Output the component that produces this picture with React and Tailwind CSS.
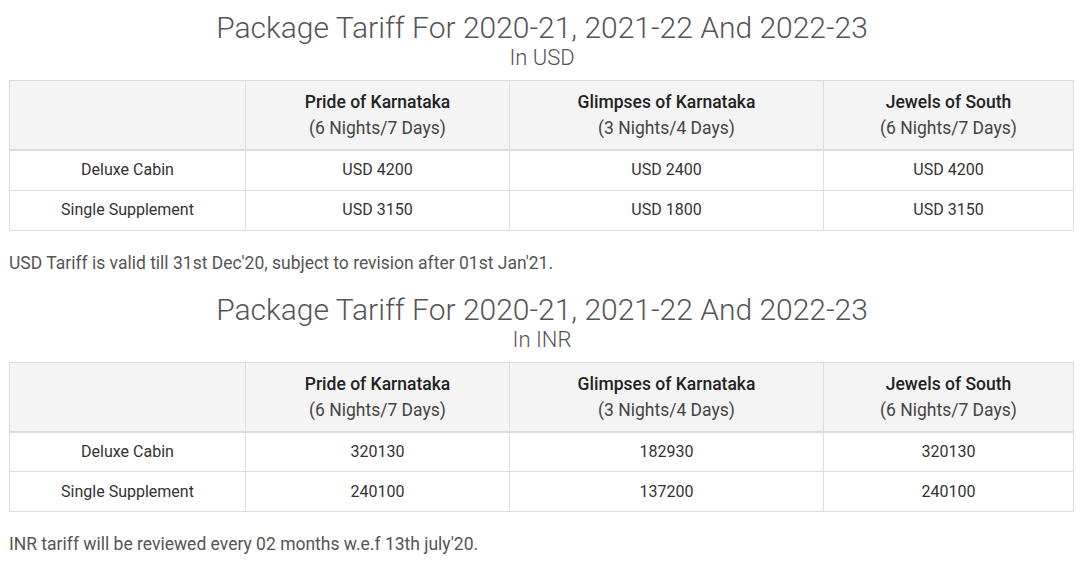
import React from 'react';

const packages = [
  { name: 'Pride of Karnataka', duration: '(6 Nights/7 Days)', w: 'w-[264px]' },
  { name: 'Glimpses of Karnataka', duration: '(3 Nights/4 Days)', w: 'w-[314px]' },
  { name: 'Jewels of South', duration: '(6 Nights/7 Days)', w: 'w-[250px]' },
];

const tariffs = [
  {
    currency: 'In USD',
    rows: [
      { label: 'Deluxe Cabin', values: ['USD 4200', 'USD 2400', 'USD 4200'] },
      { label: 'Single Supplement', values: ['USD 3150', 'USD 1800', 'USD 3150'] },
    ],
    note: "USD Tariff is valid till 31st Dec'20, subject to revision after 01st Jan'21.",
  },
  {
    currency: 'In INR',
    rows: [
      { label: 'Deluxe Cabin', values: ['320130', '182930', '320130'] },
      { label: 'Single Supplement', values: ['240100', '137200', '240100'] },
    ],
    note: "INR tariff will be reviewed every 02 months w.e.f 13th july'20.",
  },
];

function TariffBlock({ currency, rows, note }) {
  return (
    <section>
      {/* Heading */}
      <div className="text-center text-[#555] font-light">
        <h2 className="text-[30px] leading-[36px] pt-[10px]">Package Tariff For 2020-21, 2021-22 And 2022-23</h2>
        <p className="text-[22px] leading-[24px]">{currency}</p>
      </div>

      {/* Table */}
      <table className="mt-[10px] ml-[9px] w-[1064px] border-collapse table-fixed text-[#333]">
        <thead>
          <tr className="bg-[#f4f4f4]">
            <th className="w-[236px] border border-[#ddd] border-b-2"></th>
            {packages.map((p) => (
              <th key={p.name} className={`${p.w} border border-[#ddd] border-b-2 py-[8px] text-[17.5px] leading-[26px]`}>
                <span className="block font-medium text-[#222]">{p.name}</span>
                <span className="block font-normal text-[#444]">{p.duration}</span>
              </th>
            ))}
          </tr>
        </thead>
        <tbody>
          {rows.map((r) => (
            <tr key={r.label}>
              <td className="border border-[#ddd] h-[40px] text-center text-[16px]">{r.label}</td>
              {r.values.map((v, i) => (
                <td key={i} className="border border-[#ddd] h-[40px] text-center text-[16px]">{v}</td>
              ))}
            </tr>
          ))}
        </tbody>
      </table>

      <p className="ml-[9px] mt-[20px] mb-[7px] text-[17.5px] leading-[24px] text-[#555]">{note}</p>
    </section>
  );
}

export default function App() {
  return (
    <div className="w-[1084px] h-[568px] bg-white overflow-hidden" style={{ fontFamily: 'Roboto, "Liberation Sans", sans-serif' }}>
      {tariffs.map((t) => (
        <TariffBlock key={t.currency} {...t} />
      ))}
    </div>
  );
}
